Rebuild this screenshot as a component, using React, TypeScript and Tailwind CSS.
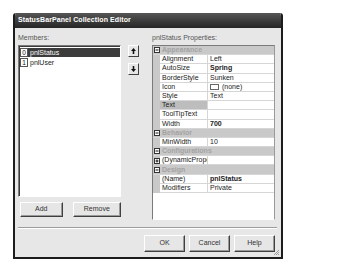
import React from 'react'

type Row =
  | { kind: 'cat'; name: string }
  | { kind: 'prop'; name: string; value?: string; bold?: boolean; selected?: boolean; icon?: boolean; plus?: boolean }

const rows: Row[] = [
  { kind: 'cat', name: 'Appearance' },
  { kind: 'prop', name: 'Alignment', value: 'Left' },
  { kind: 'prop', name: 'AutoSize', value: 'Spring', bold: true },
  { kind: 'prop', name: 'BorderStyle', value: 'Sunken' },
  { kind: 'prop', name: 'Icon', value: '(none)', icon: true },
  { kind: 'prop', name: 'Style', value: 'Text' },
  { kind: 'prop', name: 'Text', value: '', selected: true },
  { kind: 'prop', name: 'ToolTipText', value: '' },
  { kind: 'prop', name: 'Width', value: '700', bold: true },
  { kind: 'cat', name: 'Behavior' },
  { kind: 'prop', name: 'MinWidth', value: '10' },
  { kind: 'cat', name: 'Configurations' },
  { kind: 'prop', name: '(DynamicProperties)', value: '', plus: true },
  { kind: 'cat', name: 'Design' },
  { kind: 'prop', name: '(Name)', value: 'pnlStatus', bold: true },
  { kind: 'prop', name: 'Modifiers', value: 'Private' },
]

// small boxed +/- used by the property grid
function Expander({ plus = false }: { plus?: boolean }) {
  return (
    <svg width="6" height="6" viewBox="0 0 6 6" className="shrink-0">
      <rect x="0.5" y="0.5" width="5" height="5" fill="#fff" stroke="#333" />
      <line x1="1.5" y1="3" x2="4.5" y2="3" stroke="#111" />
      {plus && <line x1="3" y1="1.5" x2="3" y2="4.5" stroke="#111" />}
    </svg>
  )
}

function Btn({ label, className = '' }: { label: string; className?: string }) {
  return (
    <div
      className={`flex items-center justify-center bg-[#e6e6e6] border border-t-white border-l-white border-b-[#404040] border-r-[#404040] shadow-[inset_-1px_-1px_0_#9a9a9a] text-[7px] text-[#333] ${className}`}
    >
      {label}
    </div>
  )
}

function ArrowBtn({ down = false }: { down?: boolean }) {
  return (
    <div className="w-[11px] h-[12px] flex items-center justify-center bg-[#e6e6e6] border border-t-white border-l-white border-b-[#404040] border-r-[#404040]">
      <svg width="5" height="6" viewBox="0 0 5 6" className={down ? 'rotate-180' : ''}>
        <path d="M2.5 0 L5 3 L3.3 3 L3.3 6 L1.7 6 L1.7 3 L0 3 Z" fill="#111" />
      </svg>
    </div>
  )
}

export default function App() {
  return (
    <div className="w-[350px] h-[268px] bg-white pt-[13px] pl-[13px]" style={{ fontFamily: '"Liberation Sans", Arial, sans-serif' }}>
      <div className="w-[270px] h-[246px] flex flex-col rounded-t-[3px] overflow-hidden border-2 border-t-0 border-[#1c1c1c]">
        {/* title bar */}
        <div className="h-[15px] shrink-0 flex items-center px-[3px] bg-gradient-to-b from-[#565656] to-[#262626] text-white text-[7px] font-bold tracking-[0.1px]">
          StatusBarPanel Collection Editor
        </div>

        <div className="flex-1 flex flex-col bg-[#e7e7e7] relative">
          <div className="flex pt-[6px] pl-[3px]">
            {/* members column */}
            <div className="w-[103px] flex flex-col">
              <div className="h-[11px] text-[7px] leading-[8px] text-[#555]">Members:</div>
              <div className="h-[152px] bg-white border border-t-[#7a7a7a] border-l-[#7a7a7a] border-b-white border-r-white shadow-[inset_1px_1px_0_#3a3a3a] pt-[1px] pl-[1px]">
                <div className="flex h-[10px] items-center">
                  <div className="w-[8px] h-[9px] border border-[#555] bg-white text-[6.5px] leading-[7px] text-center text-[#111]">0</div>
                  <div className="flex-1 h-[9px] bg-[#3c3c3c] text-white text-[7px] leading-[9px] pl-[2px]">pnlStatus</div>
                </div>
                <div className="flex h-[10px] items-center">
                  <div className="w-[8px] h-[9px] border border-[#555] bg-white text-[6.5px] leading-[7px] text-center text-[#111]">1</div>
                  <div className="flex-1 h-[9px] text-[#222] text-[7px] leading-[9px] pl-[2px]">pnlUser</div>
                </div>
              </div>
              <div className="flex mt-[5px]">
                <Btn label="Add" className="ml-[2px] w-[43px] h-[15px]" />
                <Btn label="Remove" className="ml-[10px] w-[49px] h-[15px]" />
              </div>
            </div>

            {/* up/down */}
            <div className="ml-[7px] pt-[11px] flex flex-col gap-[6px]">
              <ArrowBtn />
              <ArrowBtn down />
            </div>

            {/* properties column */}
            <div className="ml-[13px] w-[123px] flex flex-col">
              <div className="h-[11px] text-[7px] leading-[8px] text-[#555]">pnlStatus Properties:</div>
              <div className="h-[175px] bg-white border border-t-[#7a7a7a] border-l-[#7a7a7a] border-b-white border-r-[#9a9a9a] overflow-hidden">
                {rows.map((r, i) =>
                  r.kind === 'cat' ? (
                    <div key={i} className="h-[9.2px] flex items-center bg-[#c9c9c9] border-b border-[#d6d6d6]">
                      <div className="w-[7px] flex justify-center"><Expander /></div>
                      <div className="pl-[2px] text-[7px] leading-[8px] font-bold text-[#a3a3a3]">{r.name}</div>
                    </div>
                  ) : (
                    <div key={i} className="h-[9.2px] flex">
                      <div className="w-[7px] bg-[#c9c9c9] flex items-center justify-center">{r.plus && <Expander plus />}</div>
                      <div className={`w-[48px] border-r border-b border-[#d6d6d6] pl-[2px] text-[7px] leading-[8.2px] text-[#222] whitespace-nowrap overflow-hidden ${r.selected ? 'bg-[#bdbdbd]' : ''}`}>
                        {r.name}
                      </div>
                      <div className={`flex-1 flex items-center gap-[3px] border-b border-[#d6d6d6] pl-[2px] text-[7px] leading-[8.2px] text-[#222] ${r.bold ? 'font-bold' : ''}`}>
                        {r.icon && <span className="w-[9px] h-[6px] border border-[#666] bg-white" />}
                        {r.value}
                      </div>
                    </div>
                  )
                )}
              </div>
            </div>
          </div>

          {/* separator */}
          <div className="mt-[7px] ml-[3px] mr-[4px] border-t border-[#9c9c9c] border-b border-b-white" />

          {/* dialog buttons */}
          <div className="mt-[6px] flex justify-end gap-[4px] pr-[6px]">
            <Btn label="OK" className="w-[41px] h-[17px]" />
            <Btn label="Cancel" className="w-[41px] h-[17px]" />
            <Btn label="Help" className="w-[41px] h-[17px]" />
          </div>

          {/* resize grip */}
          <svg width="7" height="7" viewBox="0 0 7 7" className="absolute right-[1px] bottom-[1px]">
            <path d="M6 1 L1 6 M6 3 L3 6 M6 5 L5 6" stroke="#8a8a8a" strokeWidth="0.8" />
          </svg>
        </div>
      </div>
    </div>
  )
}
